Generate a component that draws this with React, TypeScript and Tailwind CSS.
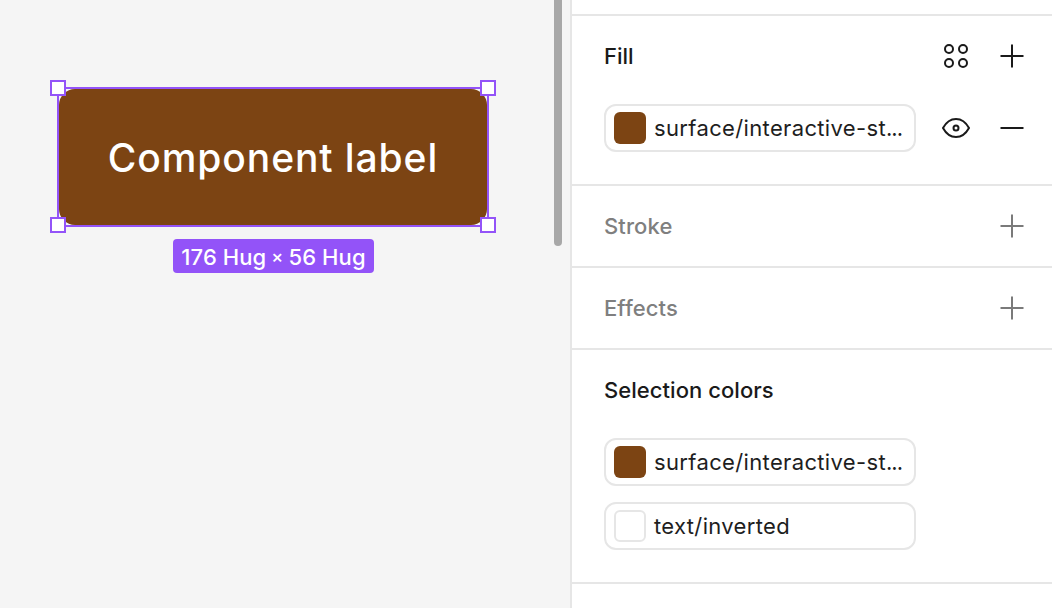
import React from 'react';

const Plus = ({ muted = false }: { muted?: boolean }) => (
  <svg width="24" height="24" viewBox="0 0 24 24" fill="none" stroke={muted ? '#7a7a7a' : '#1a1a1a'} strokeWidth="2">
    <path d="M12 0.5V23.5M0.5 12H23.5" />
  </svg>
);

const Handle = ({ className }: { className: string }) => (
  <div className={`absolute w-4 h-4 bg-white border-2 border-[#9353f8] ${className}`}></div>
);

const Swatch = ({ white = false }: { white?: boolean }) => (
  <div className={`w-8 h-8 rounded-md shrink-0 ${white ? 'bg-white border-2 border-[#e6e6e6]' : 'bg-[#7c4413]'}`}></div>
);

const ColorField = ({ label, truncated = false, white = false }: { label: string; truncated?: boolean; white?: boolean }) => (
  <div className="w-[312px] h-12 border-2 border-[#e6e6e6] rounded-xl flex items-center pl-2 gap-2 bg-white">
    <Swatch white={white} />
    <span className="text-[22px] leading-none tracking-[0.35px] text-[#1e1e1e] whitespace-nowrap">
      {label}
      {truncated && <span className="tracking-[-1px]">...</span>}
    </span>
  </div>
);

const EmptySection = ({ title }: { title: string }) => (
  <section className="h-[82px] border-b-2 border-[#e6e6e6] flex items-center justify-between pl-8 pr-7">
    <h3 className="text-[22px] font-medium tracking-[0.1px] text-[#7f7f7f]">{title}</h3>
    <Plus muted />
  </section>
);

export default function App() {
  return (
    <div className="w-[1052px] h-[608px] overflow-hidden flex bg-white font-['Inter',sans-serif]">
      {/* Canvas */}
      <div className="relative w-[570px] h-full bg-[#f5f5f5] pl-[57px] pt-[87px] shrink-0">
        <div className="relative w-[432px] h-[140px] border-2 border-[#9353f8]">
          <div className="w-full h-full bg-[#7c4413] rounded-2xl flex items-center justify-center">
            <span className="text-white text-[39px] leading-none font-medium tracking-[0.9px]">Component label</span>
          </div>
          <Handle className="-left-[9px] -top-[9px]" />
          <Handle className="-right-[9px] -top-[9px]" />
          <Handle className="-left-[9px] -bottom-[8px]" />
          <Handle className="-right-[9px] -bottom-[8px]" />
        </div>
        <div className="mt-[12px] ml-[116px] w-[201px] h-[34px] pt-px rounded bg-[#9353f8] text-white text-[22px] leading-none font-medium tracking-[0.1px] flex items-center justify-center whitespace-nowrap">
          176 Hug <span className="mx-[5px] text-[18px]">×</span> 56 Hug
        </div>
        {/* Scrollbar */}
        <div className="absolute right-2 top-0 w-2 h-[246px] bg-[#a8a8a8] rounded-b-full"></div>
      </div>

      {/* Properties panel */}
      <div className="flex-1 border-l-2 border-[#e6e6e6]">
        <div className="h-4 border-b-2 border-[#e6e6e6]"></div>

        <section className="h-[170px] border-b-2 border-[#e6e6e6] pl-8 pr-7 pt-[26px] flex flex-col">
          <div className="flex items-center justify-between h-7">
            <h3 className="text-[22px] font-medium text-[#1a1a1a]">Fill</h3>
            <div className="flex items-center gap-8">
              <svg width="24" height="24" viewBox="0 0 24 24" fill="none" stroke="#1a1a1a" strokeWidth="2">
                <circle cx="5" cy="5" r="4" />
                <circle cx="19" cy="5" r="4" />
                <circle cx="5" cy="19" r="4" />
                <circle cx="19" cy="19" r="4" />
              </svg>
              <Plus />
            </div>
          </div>
          <div className="flex items-center justify-between mt-[34px]">
            <ColorField label="surface/interactive-st" truncated />
            <div className="flex items-center gap-[30px] -ml-1">
              <svg width="28" height="20" viewBox="0 0 28 20" fill="none" stroke="#1a1a1a" strokeWidth="2">
                <path d="M1 10C4 4.500 8.500 1 14 1S24 4.500 27 10C24 15.500 19.500 19 14 19S4 15.500 1 10Z" />
                <circle cx="14" cy="10" r="2.500" />
              </svg>
              <svg width="24" height="24" viewBox="0 0 24 24" fill="none" stroke="#1a1a1a" strokeWidth="2">
                <path d="M0.5 12H23.5" />
              </svg>
            </div>
          </div>
        </section>

        <EmptySection title="Stroke" />
        <EmptySection title="Effects" />

        <section className="h-[234px] border-b-2 border-[#e6e6e6] pl-8 pt-[26px]">
          <h3 className="text-[22px] leading-7 font-medium tracking-[0.05px] text-[#1a1a1a]">Selection colors</h3>
          <div className="flex flex-col gap-4 mt-[34px]">
            <ColorField label="surface/interactive-st" truncated />
            <ColorField label="text/inverted" white />
          </div>
        </section>
      </div>
    </div>
  );
}
